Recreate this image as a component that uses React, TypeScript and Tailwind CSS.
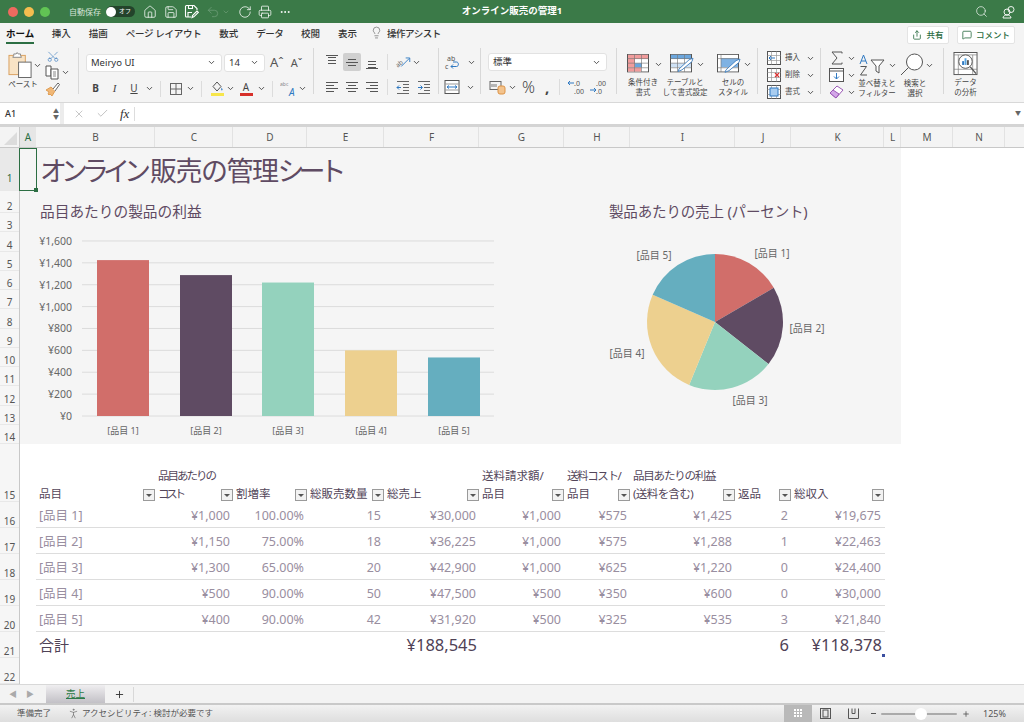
import { type ReactNode } from "react";
import {
  ChevronDown,
  Check,
  Ellipsis,
  Home,
  Lightbulb,
  MessageSquare,
  PersonStanding,
  Plus,
  Printer,
  RotateCw,
  Save,
  Scissors,
  Search,
  Share,
  Undo2,
  X,
} from "lucide-react";

const COLORS = ["#d16e6a", "#5f4b63", "#94d2bd", "#edd08f", "#65aebf"];
const BARS = [1425, 1288, 1220, 600, 535];
const REVENUE = [19675, 22463, 24400, 30000, 21840];

const COLUMNS = [
  ["B", "w-[119px]"],
  ["C", "w-[78px]"],
  ["D", "w-[74px]"],
  ["E", "w-[77px]"],
  ["F", "w-[95px]"],
  ["G", "w-[85px]"],
  ["H", "w-[66px]"],
  ["I", "w-[105px]"],
  ["J", "w-[56px]"],
  ["K", "w-[93px]"],
  ["L", "w-[17px]"],
  ["M", "w-[52px]"],
  ["N", "w-[52px]"],
];

const TABLE_W = [
  "w-[119px]",
  "w-[78px]",
  "w-[74px]",
  "w-[77px]",
  "w-[95px]",
  "w-[85px]",
  "w-[66px]",
  "w-[105px]",
  "w-[56px]",
  "w-[93px]",
];

// Meiryo UI has narrow kana, so those headers get negative tracking
const HEADERS = [
  ["", "", "品目", ""],
  ["品目あたりの", "tracking-[-2px]", "コスト", "tracking-[-3.3px]"],
  ["", "", "割増率", ""],
  ["", "", "総販売数量", ""],
  ["", "", "総売上", ""],
  ["送料請求額/", "", "品目", ""],
  ["送料コスト/", "tracking-[-1.4px]", "品目", ""],
  ["品目あたりの利益", "tracking-[-1.2px]", "(送料を含む)", "tracking-[-0.6px]"],
  ["", "", "返品", ""],
  ["", "", "総収入", ""],
];

const ROWS = [
  ["[品目 1]", "¥1,000", "100.00%", "15", "¥30,000", "¥1,000", "¥575", "¥1,425", "2", "¥19,675"],
  ["[品目 2]", "¥1,150", "75.00%", "18", "¥36,225", "¥1,000", "¥575", "¥1,288", "1", "¥22,463"],
  ["[品目 3]", "¥1,300", "65.00%", "20", "¥42,900", "¥1,000", "¥625", "¥1,220", "0", "¥24,400"],
  ["[品目 4]", "¥500", "90.00%", "50", "¥47,500", "¥500", "¥350", "¥600", "0", "¥30,000"],
  ["[品目 5]", "¥400", "90.00%", "42", "¥31,920", "¥500", "¥325", "¥535", "3", "¥21,840"],
];

const ROW_HEADS = [
  ["1", "h-[43px] pb-[6px] bg-[#e9e9e9] text-[#2c6e43]"],
  ["2", "h-[22px]"],
  ...["3", "4", "5", "6", "7", "8", "9", "10", "11", "12", "13", "14"].map((n) => [n, "h-[19.25px]"]),
  ["15", "h-[58px]"],
  ...["16", "17", "18", "19", "20", "21", "22"].map((n) => [n, "h-[26px]"]),
];

function Chev() {
  return <ChevronDown size={9} strokeWidth={2.4} className="shrink-0 text-[#444]" />;
}

function Sep() {
  return <div className="mt-[3px] h-[46px] w-px shrink-0 bg-[#d8d8d8]" />;
}

function MiniSep() {
  return <div className="mx-[6px] h-[16px] w-px shrink-0 bg-[#dcdcdc]" />;
}

function Slot({ w, children }: { w: string; children: ReactNode }) {
  return <span className={"flex shrink-0 items-center justify-center " + w}>{children}</span>;
}

function AlignV({ pos }: { pos: "top" | "mid" | "bottom" }) {
  const ys = pos === "top" ? [2, 5, 8] : pos === "mid" ? [4, 7, 10] : [6, 9, 12];
  return (
    <svg width="14" height="14" viewBox="0 0 14 14" stroke="#555" strokeWidth="1" fill="none">
      {pos === "top" && <path d="M1 .5h12" />}
      {pos === "bottom" && <path d="M1 13.5h12" />}
      <path d={`M3 ${ys[0] + 0.5}h8`} />
      <path d={`M${pos === "mid" ? 1 : 3} ${ys[1] + 0.5}h${pos === "mid" ? 12 : 8}`} />
      <path d={`M3 ${ys[2] + 0.5}h8`} />
    </svg>
  );
}

function AlignH({ pos }: { pos: "left" | "center" | "right" }) {
  const short = pos === "left" ? "M1 $h8" : pos === "center" ? "M3 $h8" : "M5 $h8";
  return (
    <svg width="14" height="14" viewBox="0 0 14 14" stroke="#555" strokeWidth="1" fill="none">
      <path d="M1 2.5h12" />
      <path d={short.replace("$", "5.5")} />
      <path d="M1 8.5h12" />
      <path d={short.replace("$", "11.5")} />
    </svg>
  );
}

function Indent({ flip }: { flip?: boolean }) {
  return (
    <svg width="14" height="14" viewBox="0 0 14 14" fill="none" strokeWidth="1">
      <path d="M1 1.5h12M7 4.5h6M7 7.5h6M7 10.5h6M1 13.5h12" stroke="#666" />
      <path d={flip ? "M1 7.5h4M3.5 5.5l2 2-2 2" : "M5 7.5H1M3 5.5l-2 2 2 2"} stroke="#2f79c2" />
    </svg>
  );
}

function Paste() {
  return (
    <svg width="26" height="28" viewBox="0 0 26 28" fill="none">
      <rect x="1" y="4" width="17" height="20" fill="#f8e3c5" stroke="#d9a05e" />
      <path d="M6 4V2.5h2.5L9.5 1l1 1.5H13V4l1 2H5z" fill="#fff" stroke="#888" />
      <rect x="11" y="11" width="13" height="16" fill="#fff" stroke="#666" />
    </svg>
  );
}

function CopyIcon() {
  return (
    <svg width="14" height="15" viewBox="0 0 14 15" fill="none" stroke="#555">
      <path d="M1 1h5v10H1z" fill="#fff" />
      <path d="M6 4h7v10H6z" fill="#fff" />
      <path d="M8 7h3M8 9h3M8 11h3" strokeWidth=".7" />
    </svg>
  );
}

function Brush() {
  return (
    <svg width="16" height="16" viewBox="0 0 16 16" fill="none">
      <path d="M1 9l5-3 4 4-3 5-2-2-1 1-1-1 1-2z" fill="#f0b776" stroke="#d9903f" strokeWidth=".8" />
      <path d="M8 8l5-6 1.5 1.5L10 10" fill="#fff" stroke="#555" strokeWidth=".9" />
    </svg>
  );
}

function BorderIcon() {
  return (
    <svg width="14" height="14" viewBox="0 0 14 14" fill="none" stroke="#666" strokeWidth="1">
      <rect x="1.5" y="1.5" width="11" height="11" />
      <path d="M7 1.5v11M1.5 7h11" />
    </svg>
  );
}

function FillIcon() {
  return (
    <svg width="15" height="15" viewBox="0 0 15 15" fill="none">
      <path d="M7 1l4 4.5L7 10 3 5.5z" stroke="#555" />
      <path d="M11.5 6.5c1 1.5 1.5 2 .8 2.8-.7.4-1.4-.2-1-1.2z" fill="#2f79c2" />
      <rect x="1" y="12" width="13" height="3" fill="#f7e64b" />
    </svg>
  );
}

function ClearFormat() {
  return (
    <svg width="18" height="18" viewBox="0 0 18 18" fill="none">
      <text x="0" y="6" fontSize="5" fill="#888">abc</text>
      <text x="9" y="16" fontSize="10" fontStyle="italic" fill="#2f79c2">A</text>
    </svg>
  );
}

function Orient() {
  return (
    <svg width="20" height="16" viewBox="0 0 20 16" fill="none">
      <text x="1" y="12" fontSize="7" fill="#666" transform="rotate(-40 6 9)">ab</text>
      <path d="M8 13L17 4M13 3.5h4.5V8" stroke="#2f79c2" />
    </svg>
  );
}

function WrapIcon() {
  return (
    <svg width="17" height="17" viewBox="0 0 17 17" fill="none">
      <text x="3" y="7" fontSize="7" fill="#555">ab</text>
      <text x="1" y="15" fontSize="7" fill="#555">c</text>
      <path d="M7 12.5h5.5c2.5 0 2.5-4.5 0-4.5H9M9 10.5l-2 2 2 2" stroke="#2f79c2" />
    </svg>
  );
}

function MergeIcon() {
  return (
    <svg width="16" height="16" viewBox="0 0 16 16" fill="none">
      <rect x="1" y="1.5" width="14" height="13" fill="#fff" stroke="#555" />
      <path d="M1 5h14M1 11h14" stroke="#999" />
      <path d="M3 8h10M5 6.5L3 8l2 1.5M11 6.5L13 8l-2 1.5" stroke="#2f79c2" />
    </svg>
  );
}

function CurrencyIcon() {
  return (
    <svg width="18" height="16" viewBox="0 0 18 16" fill="none">
      <rect x="1" y="2.5" width="11" height="8" stroke="#666" />
      <path d="M3 5v3M5 5v3M7 5v3" stroke="#777" />
      <rect x="9" y="7" width="7" height="8" rx="2" fill="#f3c38d" stroke="#dd9345" />
    </svg>
  );
}

function DecimalIcon({ flip }: { flip?: boolean }) {
  return (
    <svg width="20" height="16" viewBox="0 0 20 16" fill="none">
      <text x="8" y="7" fontSize="7" fill="#555">{flip ? ".00" : ".0"}</text>
      <text x="8" y="15" fontSize="7" fill="#555">{flip ? ".0" : ".00"}</text>
      <path d={flip ? "M2 11h6M6 9l2 2-2 2" : "M8 4H2M4 2L2 4l2 2"} stroke="#2f79c2" />
    </svg>
  );
}

function CondIcon() {
  return (
    <svg width="24" height="20" viewBox="0 0 24 24" preserveAspectRatio="none" fill="none">
      <rect x=".5" y=".5" width="21" height="21" fill="#fff" stroke="#555" />
      <rect x="1" y="1" width="20" height="5" fill="#f19c9c" />
      <rect x="1" y="6" width="7" height="10" fill="#f19c9c" />
      <rect x="8" y="11" width="7" height="5" fill="#6ba6dd" />
      <rect x="1" y="16" width="13" height="5" fill="#f19c9c" />
      <path d="M.5 5.5h21M.5 11h21M.5 16.5h21M7.5.5v21M14.5.5v21" stroke="#777" strokeWidth=".7" />
    </svg>
  );
}

function TableIcon() {
  return (
    <svg width="26" height="20" viewBox="0 0 26 24" preserveAspectRatio="none" fill="none">
      <rect x=".5" y=".5" width="21" height="21" fill="#fff" stroke="#555" />
      <rect x="1" y="1" width="20" height="5" fill="#6ba6dd" />
      <rect x="1" y="11" width="20" height="5" fill="#cfe2f5" />
      <path d="M.5 5.5h21M.5 11h21M.5 16.5h21M7.5.5v21M14.5.5v21" stroke="#777" strokeWidth=".7" />
      <path d="M9 18l10-11 4-2-1 4-10 10-4 2z" fill="#fff" stroke="#3f7fc0" />
    </svg>
  );
}

function StyleIcon() {
  return (
    <svg width="26" height="20" viewBox="0 0 26 24" preserveAspectRatio="none" fill="none">
      <rect x=".5" y=".5" width="21" height="21" fill="#fff" stroke="#555" />
      <rect x="4" y="5" width="17" height="11" fill="#7fb2e3" />
      <path d="M.5 5.5h21M.5 16.5h21M4 .5v21" stroke="#777" strokeWidth=".7" />
      <path d="M9 19l10-11 4-2-1 4-10 10-4 2z" fill="#fff" stroke="#3f7fc0" />
    </svg>
  );
}

function CellOp({ kind }: { kind: "insert" | "delete" | "format" }) {
  return (
    <svg width="14" height="14" viewBox="0 0 14 14" fill="none">
      <rect x=".5" y=".5" width="13" height="13" fill="#fff" stroke="#555" />
      <path d="M.5 4.5h13M.5 9.5h13M4.5.5v13M9.5.5v13" stroke="#999" strokeWidth=".7" />
      {kind === "insert" && <path d="M8 7H2M4 5L2 7l2 2" stroke="#2f79c2" />}
      {kind === "delete" && <path d="M8 5l4 4M12 5L8 9" stroke="#d33" strokeWidth="1.2" />}
      {kind === "format" && <rect x="3" y="3" width="8" height="8" fill="#a9cdf0" stroke="#2f79c2" />}
    </svg>
  );
}

function SumIcon() {
  return (
    <svg width="14" height="14" viewBox="0 0 14 14" fill="none" stroke="#555" strokeWidth="1">
      <path d="M12 2.5V1H2l5 6-5 6h10v-1.5" />
    </svg>
  );
}

function FillDown() {
  return (
    <svg width="15" height="14" viewBox="0 0 15 14" fill="none">
      <rect x=".5" y=".5" width="14" height="13" fill="#fff" stroke="#555" />
      <path d="M.5 3h14" stroke="#555" />
      <path d="M7.5 5v6M5 8.5l2.5 2.5L10 8.5" stroke="#2f79c2" />
    </svg>
  );
}

function Eraser() {
  return (
    <svg width="15" height="14" viewBox="0 0 15 14" fill="none">
      <path d="M1 8l7-7 6 4-7 8z" fill="#fff" stroke="#9b59b6" />
      <path d="M1 8l3-3 6 4-3 4z" fill="#d3a6e8" stroke="#9b59b6" />
    </svg>
  );
}

function SortIcon() {
  return (
    <svg width="26" height="22" viewBox="0 0 26 22" fill="none">
      <path d="M12 6h13l-5 6v7l-3-2v-5z" fill="#fff" stroke="#555" />
      <path d="M1 10L4.5 1 8 10M2.2 7h4.6" stroke="#2f79c2" strokeWidth="1" />
      <path d="M1.5 12.5h6L1.5 21H8" stroke="#555" strokeWidth="1" />
    </svg>
  );
}

function FindIcon() {
  return (
    <svg width="24" height="24" viewBox="0 0 24 24" fill="none" stroke="#555">
      <circle cx="14.5" cy="9" r="8" fill="#fff" />
      <path d="M8.5 14.5L1 22" />
    </svg>
  );
}

function AnalyzeIcon() {
  return (
    <svg width="25" height="25" viewBox="0 0 25 25" fill="none">
      <rect x=".5" y=".5" width="24" height="23" fill="#fff" stroke="#555" />
      <path d="M.5 3h24M.5 18h24M5 3v20M20 3v20" stroke="#777" strokeWidth=".7" />
      <circle cx="12.5" cy="10" r="7" fill="#fff" stroke="#555" />
      <path d="M9 9.5h2v4H9z" fill="#2f79c2" />
      <path d="M11.5 6.5h2v7h-2z" fill="#59a5e0" />
      <path d="M14 8.5h2v5h-2z" fill="#555" />
      <path d="M17.5 15.5l6 7" stroke="#555" strokeWidth="1.4" />
    </svg>
  );
}

function SaveAs() {
  return (
    <svg width="15" height="15" viewBox="0 0 15 15" fill="none" stroke="#fff" strokeWidth="1.1">
      <path d="M7 13H2.5A1 1 0 0 1 1.5 12V2.5a1 1 0 0 1 1-1H10l3 3V6" />
      <path d="M4.5 1.5v3h4v-3M4 13V8.5h4" />
      <path d="M8 13.5l.5-2 4.5-4.5 1.3 1.3-4.5 4.5z" />
    </svg>
  );
}

function TitleBar() {
  return (
    <div className="relative flex h-[23px] items-center bg-[#3b7a48] text-white">
      <div className="ml-[8px] flex gap-[6px]">
        <span className="h-[10px] w-[10px] rounded-full bg-[#ee6a5f]" />
        <span className="h-[10px] w-[10px] rounded-full bg-[#f5bd4f]" />
        <span className="h-[10px] w-[10px] rounded-full bg-[#61c454]" />
      </div>
      <span className="ml-[19px] text-[8px] text-[#d6e4d8]">自動保存</span>
      <div className="ml-[5px] flex h-[11px] w-[29px] items-center justify-between rounded-full bg-[#23432b] pr-[4px]">
        <span className="h-[10px] w-[10px] rounded-full bg-white" />
        <span className="text-[6px]">オフ</span>
      </div>
      <div className="ml-[8px] flex items-center gap-[6.5px]">
        <Home size={14} strokeWidth={1.3} />
        <Save size={14} strokeWidth={1.3} />
        <SaveAs />
        <Undo2 size={14} strokeWidth={1.3} className="text-[#6f9f79]" />
      </div>
      <ChevronDown size={8} className="ml-[2px] text-[#6f9f79]" />
      <RotateCw size={14} strokeWidth={1.3} className="ml-[8px]" />
      <Printer size={14} strokeWidth={1.3} className="ml-[6px]" />
      <Ellipsis size={12} className="ml-[7px]" />
      <span className="absolute left-0 right-0 text-center text-[9.5px] font-bold">オンライン販売の管理1</span>
      <div className="ml-auto mr-[8px] flex items-center gap-[14px]">
        <Search size={13} strokeWidth={1.2} />
        <svg width="14" height="14" viewBox="0 0 14 14" fill="none" stroke="#fff" strokeWidth=".9">
          <circle cx="9" cy="4.5" r="3" />
          <circle cx="5" cy="7" r="3" />
          <path d="M1 13c0-2 2-3 4-3s4 1 4 3z" />
        </svg>
      </div>
    </div>
  );
}

function TabRow() {
  const tabs = [
    ["挿入", ""],
    ["描画", ""],
    ["ページ レイアウト", "tracking-[-0.3px]"],
    ["数式", ""],
    ["データ", "tracking-[-0.6px]"],
    ["校閲", ""],
    ["表示", ""],
  ];
  return (
    <div className="flex h-[22px] items-start bg-[#f4f4f4] pl-[6px] text-[9.5px] font-medium text-[#333]">
      <div className="flex h-[22px] flex-col items-stretch">
        <span className="mt-[4px] font-bold leading-[13px] text-[#111]">ホーム</span>
        <span className="mt-[2px] h-[2px] bg-[#2c6e43]" />
      </div>
      <div className="ml-[17.5px] mt-[4px] flex gap-[18px] leading-[13px]">
        {tabs.map(([t, cls]) => (
          <span key={t} className={cls}>{t}</span>
        ))}
      </div>
      <Lightbulb size={13} strokeWidth={1.1} className="ml-[13px] mt-[3px] text-[#555]" />
      <span className="ml-[4px] mt-[4px] tracking-[-0.5px] leading-[13px]">操作アシスト</span>
      <div className="ml-auto mr-[9px] mt-[3px] flex gap-[8px]">
        <div className="flex h-[18px] w-[42px] items-center justify-center gap-[4px] rounded-[2px] border border-[#e4e4e4] bg-white text-[8.5px]">
          <Share size={10} className="text-[#2c6e43]" />
          <span className="text-[#2c6e43]">共有</span>
        </div>
        <div className="flex h-[18px] w-[58px] items-center justify-center gap-[4px] rounded-[2px] border border-[#e4e4e4] bg-white text-[8.5px]">
          <MessageSquare size={10} className="text-[#2c6e43]" />
          <span className="text-[#2c6e43]">コメント</span>
        </div>
      </div>
    </div>
  );
}

function Ribbon() {
  const label = "text-center text-[7.5px] leading-[10px] text-[#444]";
  const input = "flex h-[18px] items-center justify-between rounded-[3px] border border-[#e2e2e2] bg-white pl-[4px] pr-[5px] text-[9.5px] text-[#333]";
  return (
    <div className="flex h-[58px] items-start border-b border-[#d8d8d8] bg-[#f4f4f4]">
      {/* clipboard */}
      <div className="flex h-[52px] w-[78px] shrink-0">
        <div className="ml-[8px] flex w-[34px] flex-col">
          <div className="mt-[6px] flex items-center">
            <Paste />
            <Chev />
          </div>
          <span className="w-[30px] text-center text-[7.5px] leading-[10px] text-[#444]">ペースト</span>
        </div>
        <div className="ml-[3px] flex flex-col pt-[5px]">
          <Scissors size={14} strokeWidth={1.2} className="ml-[1px] rotate-[-90deg] text-[#3f7fc0]" />
          <div className="mt-[2px] flex items-center gap-[2px]">
            <CopyIcon />
            <Chev />
          </div>
          <div className="mt-[1px]">
            <Brush />
          </div>
        </div>
      </div>
      <Sep />
      {/* font */}
      <div className="flex h-[52px] w-[234px] shrink-0 flex-col pl-[7px] pt-[8px]">
        <div className="flex items-center gap-[2px]">
          <div className={input + " w-[136px]"}>
            <span>Meiryo UI</span>
            <Chev />
          </div>
          <div className={input + " w-[41px]"}>
            <span>14</span>
            <Chev />
          </div>
          <span className="ml-[3px] text-[13px] text-[#555]">Aˆ</span>
          <span className="ml-[5px] text-[11px] text-[#555]">Aˇ</span>
        </div>
        <div className="mt-[7px] flex h-[18px] items-center text-[10px] text-[#444]">
          <Slot w="w-[19px]"><b>B</b></Slot>
          <Slot w="w-[19px]"><i className="font-['Liberation_Serif',serif] text-[11px]">I</i></Slot>
          <Slot w="w-[20px]"><u>U</u></Slot>
          <span className="ml-px"><Chev /></span>
          <MiniSep />
          <Slot w="w-[18px]"><BorderIcon /></Slot>
          <Slot w="w-[10px]"><Chev /></Slot>
          <MiniSep />
          <Slot w="w-[18px]"><FillIcon /></Slot>
          <Chev />
          <Slot w="w-[22px]">
            <span className="flex flex-col items-center leading-[11px]">
              <span>A</span>
              <span className="h-[3px] w-[13px] bg-[#d7302a]" />
            </span>
          </Slot>
          <Chev />
          <MiniSep />
          <Slot w="w-[19px]"><ClearFormat /></Slot>
          <Chev />
        </div>
      </div>
      <Sep />
      {/* alignment */}
      <div className="flex h-[52px] w-[124px] shrink-0 flex-col pl-[9px] pt-[8px]">
        <div className="flex h-[18px] items-center">
          <Slot w="w-[18px]"><AlignV pos="top" /></Slot>
          <span className="ml-[2px] flex h-[18px] w-[18px] items-center justify-center rounded-[2px] bg-[#d0d0d0]"><AlignV pos="mid" /></span>
          <span className="ml-[2px]"><Slot w="w-[18px]"><AlignV pos="bottom" /></Slot></span>
          <MiniSep />
          <Slot w="w-[18px]"><Orient /></Slot>
          <Chev />
        </div>
        <div className="mt-[7px] flex h-[18px] items-center">
          <Slot w="w-[18px]"><AlignH pos="left" /></Slot>
          <span className="ml-[2px]"><Slot w="w-[18px]"><AlignH pos="center" /></Slot></span>
          <span className="ml-[2px]"><Slot w="w-[18px]"><AlignH pos="right" /></Slot></span>
          <MiniSep />
          <Slot w="w-[18px]"><Indent /></Slot>
          <span className="ml-[3px]"><Slot w="w-[18px]"><Indent flip /></Slot></span>
        </div>
      </div>
      <Sep />
      {/* wrap */}
      <div className="flex h-[52px] w-[41px] shrink-0 flex-col pl-[5px] pt-[8px]">
        <div className="flex h-[18px] items-center gap-[6px]">
          <WrapIcon />
          <Chev />
        </div>
        <div className="mt-[7px] flex h-[18px] items-center gap-[6px]">
          <MergeIcon />
          <Chev />
        </div>
      </div>
      <Sep />
      {/* number */}
      <div className="flex h-[52px] w-[135px] shrink-0 flex-col pl-[7px] pt-[8px]">
        <div className={input + " w-[119px]"}>
          <span>標準</span>
          <Chev />
        </div>
        <div className="mt-[7px] flex h-[18px] items-center text-[#444]">
          <span className="ml-[1px]"><CurrencyIcon /></span>
          <span className="ml-[1px]"><Chev /></span>
          <span className="ml-[5px] text-[16px] font-light">%</span>
          <span className="ml-[10px] w-[8px] text-[15px] font-bold">,</span>
          <MiniSep />
          <DecimalIcon />
          <span className="ml-[2px]"><DecimalIcon flip /></span>
        </div>
      </div>
      <Sep />
      {/* styles */}
      <div className="flex h-[52px] w-[140px] shrink-0 pl-[7px] pt-[9px]">
        <div className="flex w-[46px] flex-col">
          <div className="flex items-center gap-[3px] pl-[3px]">
            <CondIcon />
            <Chev />
          </div>
          <span className={label + " mt-[3px] w-[38px]"}>条件付き<br />書式</span>
        </div>
        <div className="flex w-[47px] flex-col">
          <div className="flex items-center">
            <TableIcon />
            <Chev />
          </div>
          <span className={label + " -ml-[10px] mt-[3px] w-[50px]"}>テーブルと<br />して書式設定</span>
        </div>
        <div className="flex w-[36px] flex-col">
          <div className="flex items-center">
            <StyleIcon />
            <Chev />
          </div>
          <span className={label + " mt-[3px] w-[32px]"}>セルの<br />スタイル</span>
        </div>
      </div>
      <Sep />
      {/* cells */}
      <div className="flex h-[52px] w-[62px] shrink-0 flex-col gap-[3px] pl-[9px] pt-[6px] text-[7.5px] text-[#444]">
        {(["insert", "delete", "format"] as const).map((k, i) => (
          <div key={k} className="flex h-[14px] items-center gap-[4px]">
            <CellOp kind={k} />
            <span className="w-[17px]">{["挿入", "削除", "書式"][i]}</span>
            <Chev />
          </div>
        ))}
      </div>
      <Sep />
      {/* editing */}
      <div className="flex h-[52px] w-[122px] shrink-0 pl-[8px]">
        <div className="flex w-[28px] flex-col gap-[3px] pt-[6px]">
          {[<SumIcon key="s" />, <FillDown key="f" />, <Eraser key="e" />].map((ic, i) => (
            <div key={i} className="flex h-[14px] items-center gap-[3px]">
              <Slot w="w-[15px]">{ic}</Slot>
              <Chev />
            </div>
          ))}
        </div>
        <div className="flex w-[43px] flex-col pt-[9px]">
          <div className="flex items-center gap-[3px] pl-[2px]">
            <SortIcon />
            <Chev />
          </div>
          <span className={label + " -ml-px mt-[2px] w-[42px]"}>並べ替えと<br />フィルター</span>
        </div>
        <div className="flex w-[36px] flex-col pt-[8px]">
          <div className="flex items-center gap-px">
            <FindIcon />
            <Chev />
          </div>
          <span className={label + " ml-[3px] mt-px w-[24px]"}>検索と<br />選択</span>
        </div>
      </div>
      <Sep />
      {/* analysis */}
      <div className="flex h-[52px] w-[78px] shrink-0 flex-col pl-[9px] pt-[7px]">
        <AnalyzeIcon />
        <span className={label + " mt-px w-[25px] whitespace-nowrap"}>データ<br />の分析</span>
      </div>
    </div>
  );
}

function FormulaBar() {
  return (
    <div className="flex h-[24px] items-stretch border-b-[3px] border-[#d4d4d4] bg-white">
      <div className="flex w-[60px] items-center justify-between pl-[5px] pr-[1px] text-[9px] font-medium text-[#333]">
        <span>A1</span>
        <span className="flex flex-col text-[6px] leading-[6px] text-[#666]">
          <span>▲</span>
          <span>▼</span>
        </span>
      </div>
      <div className="w-[4px] bg-[#ececec]" />
      <div className="flex items-center pl-[9px]">
        <X size={12} strokeWidth={1.5} className="text-[#b4b4b4]" />
        <Check size={13} strokeWidth={1.5} className="ml-[11px] text-[#b4b4b4]" />
        <span className="ml-[11px] font-['Liberation_Serif',serif] text-[13px] italic text-[#333]">fx</span>
        <div className="ml-[5px] h-[14px] w-px bg-[#ddd]" />
      </div>
      <span className="ml-auto mr-[3px] self-center text-[6px] text-[#666]">▼</span>
    </div>
  );
}

function ColumnHeader() {
  return (
    <div className="flex h-[21px] border-b border-[#c8c8c8] bg-[#f4f4f4] text-[10px] text-[#555]">
      <div className="flex w-[20px] items-end justify-end border-r border-[#c8c8c8] p-[2px]">
        <span className="h-0 w-0 border-b-[13px] border-l-[13px] border-b-[#dcdcdc] border-l-transparent" />
      </div>
      <div className="flex w-[16px] items-center justify-center bg-[#e6e6e6] text-[#2c6e43]">A</div>
      {COLUMNS.map(([c, w]) => (
        <div key={c} className={"flex items-center justify-center border-r border-[#e2e2e2] pl-px " + w}>
          {c}
        </div>
      ))}
    </div>
  );
}

function BarChart() {
  const y = (v: number) => 184 - v * 0.1094;
  const xs = [77, 160, 242, 325, 408];
  const ticks = [0, 200, 400, 600, 800, 1000, 1200, 1400, 1600];
  return (
    <svg width="560" height="212" viewBox="0 0 560 212">
      {ticks.map((t) => (
        <g key={t}>
          <line x1="62" x2="474" y1={y(t)} y2={y(t)} stroke="#dcdcdc" />
          <text x="52" y={y(t) + 4} textAnchor="end" fontSize="10.5" fill="#666">
            ¥{t.toLocaleString("en-US")}
          </text>
        </g>
      ))}
      {BARS.map((b, i) => (
        <g key={i}>
          <rect x={xs[i]} y={y(b)} width="52" height={b * 0.1094} fill={COLORS[i]} />
          <text x={xs[i] + 26} y="202" textAnchor="middle" fontSize="9" fill="#666">
            [品目 {i + 1}]
          </text>
        </g>
      ))}
    </svg>
  );
}

function PieChart() {
  const total = REVENUE.reduce((a, b) => a + b, 0);
  const cx = 135;
  const cy = 90;
  const r = 68;
  let acc = 0;
  const labels = [
    [192, 25],
    [227, 100],
    [170, 172],
    [47, 125],
    [74, 27],
  ];
  return (
    <svg width="321" height="212" viewBox="0 0 321 212">
      {REVENUE.map((v, i) => {
        const a0 = (acc / total) * 2 * Math.PI;
        acc += v;
        const a1 = (acc / total) * 2 * Math.PI;
        const p = (a: number) => `${cx + r * Math.sin(a)} ${cy - r * Math.cos(a)}`;
        return (
          <path
            key={i}
            d={`M${cx} ${cy}L${p(a0)}A${r} ${r} 0 ${a1 - a0 > Math.PI ? 1 : 0} 1 ${p(a1)}Z`}
            fill={COLORS[i]}
          />
        );
      })}
      {labels.map(([x, ly], i) => (
        <text key={i} x={x} y={ly} textAnchor="middle" fontSize="10" fill="#666">
          [品目 {i + 1}]
        </text>
      ))}
    </svg>
  );
}

function Dashboard() {
  return (
    <div className="h-[296px] w-[881px] bg-[#f5f5f5] text-[#5f4b63]">
      <div className="h-[43px] pl-[20px] pt-[5px] text-[27px] leading-[36px]">
        <span className="tracking-[-6px]">オンライン</span>
        <span className="ml-[5px] tracking-[-1.5px]">販売</span>
        <span className="tracking-[-1.5px]">の管理</span>
        <span className="tracking-[-6px]">シート</span>
      </div>
      <div className="flex">
        <div className="w-[560px]">
          <div className="h-[41px] pl-[20px] pt-[10px] text-[14.7px] leading-[20px]">品目あたりの製品の利益</div>
          <BarChart />
        </div>
        <div className="w-[321px]">
          <div className="h-[41px] pl-[29px] pt-[10px] text-[14.5px] leading-[20px] tracking-[-0.15px]">製品あたりの売上 (パーセント)</div>
          <PieChart />
        </div>
      </div>
    </div>
  );
}

function FilterBtn() {
  return (
    <span className="mb-[1px] flex h-[12px] w-[12px] shrink-0 items-center justify-center border border-[#9a9a9a] bg-[#f2f2f2]">
      <span className="h-0 w-0 border-x-[3px] border-t-[3px] border-x-transparent border-t-[#555]" />
    </span>
  );
}

function DataTable() {
  return (
    <div className="ml-[16px] w-[849px]">
      <div className="flex h-[58px]">
        {HEADERS.map(([a, aCls, b, bCls], i) => (
          <div key={i} className={"flex items-end pl-[3px] text-[11.5px] leading-[18px] text-[#53465a] " + TABLE_W[i]}>
            <span className="-mb-px w-0 flex-1 whitespace-nowrap">
              {a && <span className={"block " + aCls}>{a}</span>}
              <span className={"block " + bCls}>{b}</span>
            </span>
            <FilterBtn />
          </div>
        ))}
      </div>
      {ROWS.map((r) => (
        <div key={r[0]} className="flex h-[26px] items-center border-b-[1.5px] border-[#dddddd] pt-[3px] text-[12.5px] text-[#998ea0]">
          {r.map((c, i) => (
            <div key={i} className={(i === 0 ? "pl-[3px] text-left " : "pr-[3px] text-right ") + TABLE_W[i]}>
              {c}
            </div>
          ))}
        </div>
      ))}
      <div className="relative flex h-[26px] items-center pt-px text-[16.5px] text-[#4f4256]">
        <div className="w-[119px] pl-[3px] text-[15px]">合計</div>
        <div className="w-[78px]" />
        <div className="w-[74px]" />
        <div className="w-[77px]" />
        <div className="w-[95px] pr-[2px] text-right">¥188,545</div>
        <div className="w-[85px]" />
        <div className="w-[66px]" />
        <div className="w-[105px]" />
        <div className="w-[56px] pr-[2px] text-right">6</div>
        <div className="w-[93px] pr-[2px] text-right">¥118,378</div>
        <span className="absolute bottom-[1px] right-0 h-[3px] w-[3px] bg-[#3b4fa0]" />
      </div>
    </div>
  );
}

function Sheet() {
  return (
    <div className="relative flex h-[536px] overflow-hidden bg-white">
      <div className="w-[20px] shrink-0 border-r border-[#c8c8c8] bg-[#f6f6f6] text-[10px] leading-[12px] text-[#555]">
        {ROW_HEADS.map(([n, cls]) => (
          <div key={n} className={"flex items-end justify-center border-b border-[#e8e8e8] " + cls}>
            {n}
          </div>
        ))}
      </div>
      <div className="flex-1">
        <Dashboard />
        <DataTable />
      </div>
      <div className="absolute left-[19px] top-0 h-[43px] w-[18px] border-[1.5px] border-[#2c6e43]">
        <span className="absolute -bottom-[2px] -right-[2px] h-[4px] w-[4px] bg-[#2c6e43]" />
      </div>
    </div>
  );
}

function SheetTabs() {
  return (
    <div className="flex h-[19px] items-stretch border-t border-[#d8d8d8] bg-[#f3f3f3]">
      <span className="ml-[9px] self-center text-[8px] text-[#aaa]">◀</span>
      <span className="ml-[9px] self-center text-[8px] text-[#aaa]">▶</span>
      <div className="ml-[12px] flex w-[59px] items-center justify-center bg-gradient-to-b from-[#efeef0] to-[#c2c0c6] text-[9.5px] text-[#2c7a48] underline">
        売上
      </div>
      <Plus size={11} strokeWidth={2} className="ml-[9px] self-center text-[#333]" />
      <div className="ml-[8px] h-[15px] w-px self-center bg-[#d8d8d8]" />
    </div>
  );
}

function StatusBar() {
  return (
    <div className="flex h-[19px] items-center border-t-2 border-[#c9c9c9] bg-gradient-to-b from-[#f2f2f2] to-[#dedede] text-[8.5px] text-[#555]">
      <span className="ml-[17px]">準備完了</span>
      <PersonStanding size={13} strokeWidth={1.2} className="ml-[16px] text-[#666]" />
      <span className="ml-[2px]">アクセシビリティ: 検討が必要です</span>
      <div className="ml-auto flex h-full items-center">
        <div className="flex h-full w-[28px] items-center justify-center bg-[#b9b9b9]">
          <svg width="11" height="11" viewBox="0 0 11 11" fill="#fff">
            {[1, 4, 7].map((x) => [1, 4, 7].map((y) => <rect key={x + "-" + y} x={x} y={y} width="2" height="2" />))}
          </svg>
        </div>
        <svg width="11" height="11" viewBox="0 0 11 11" fill="none" stroke="#555" className="ml-[8px]">
          <rect x=".5" y=".5" width="10" height="10" />
          <rect x="3" y="2" width="5" height="7" />
        </svg>
        <svg width="11" height="11" viewBox="0 0 11 11" fill="none" stroke="#555" className="ml-[17px]">
          <path d="M.5 .5v10h10v-10M4 .5v5h3v-5" />
        </svg>
        <span className="ml-[12px] h-[1.5px] w-[5px] bg-[#555]" />
        <div className="relative ml-[5px] h-[2px] w-[76px] rounded bg-[#aaa]">
          <span className="absolute -top-[5px] left-[34px] h-[12px] w-[12px] rounded-full bg-white" />
        </div>
        <Plus size={8} strokeWidth={2.5} className="ml-[5px] text-[#555]" />
        <span className="ml-[13px] mr-[18px] text-[9px]">125%</span>
      </div>
    </div>
  );
}

export default function App() {
  return (
    <div className="h-[722px] w-[1024px] overflow-hidden bg-white font-['Noto_Sans','Noto_Sans_CJK_JP',sans-serif]">
      <TitleBar />
      <TabRow />
      <Ribbon />
      <FormulaBar />
      <ColumnHeader />
      <Sheet />
      <SheetTabs />
      <StatusBar />
    </div>
  );
}
